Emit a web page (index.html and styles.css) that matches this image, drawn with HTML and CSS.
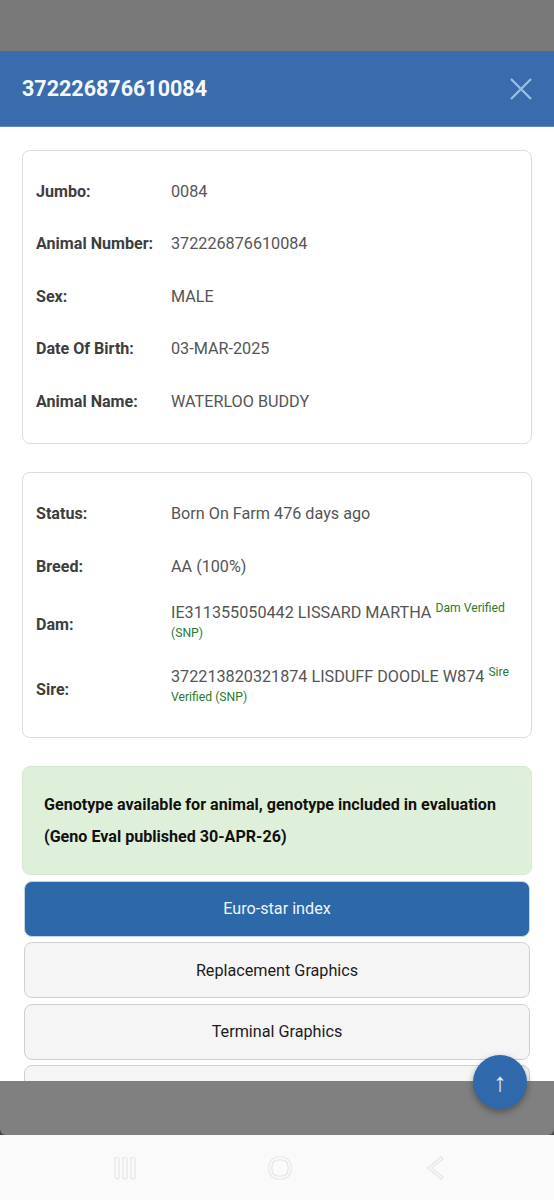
FILE: index.html

```html
<!DOCTYPE html>
<html lang="en">
<head>
  <meta charset="UTF-8">
  <meta name="viewport" content="width=device-width, initial-scale=1.0">
  <title>372226876610084</title>
  <link rel="stylesheet" href="styles.css">
</head>
<body>
  <div class="screen">
    <div class="dim-top"></div>

    <div class="modal">
      <div class="modal-header">
        <h1>372226876610084</h1>
        <svg class="close-icon" width="24" height="24" viewBox="0 0 24 24" fill="none" stroke="currentColor" stroke-width="2.2">
          <path d="M2 2 L22 22 M22 2 L2 22" />
        </svg>
      </div>

      <div class="modal-body">
        <div class="card">
          <div class="row"><span class="label">Jumbo:</span><span class="value">0084</span></div>
          <div class="row"><span class="label">Animal Number:</span><span class="value">372226876610084</span></div>
          <div class="row"><span class="label">Sex:</span><span class="value">MALE</span></div>
          <div class="row"><span class="label">Date Of Birth:</span><span class="value">03-MAR-2025</span></div>
          <div class="row"><span class="label">Animal Name:</span><span class="value">WATERLOO BUDDY</span></div>
        </div>

        <div class="card card-parents">
          <div class="row"><span class="label">Status:</span><span class="value">Born On Farm 476 days ago</span></div>
          <div class="row"><span class="label">Breed:</span><span class="value">AA (100%)</span></div>
          <div class="row row-tall">
            <span class="label">Dam:</span>
            <span class="value">IE311355050442 LISSARD MARTHA <sup class="verified">Dam Verified</sup> <sub class="verified">(SNP)</sub></span>
          </div>
          <div class="row row-tall">
            <span class="label">Sire:</span>
            <span class="value">372213820321874 LISDUFF DOODLE W874 <sup class="verified">Sire</sup> <sub class="verified">Verified (SNP)</sub></span>
          </div>
        </div>

        <div class="notice">
          <p>Genotype available for animal, genotype included in evaluation</p>
          <p>(Geno Eval published 30-APR-26)</p>
        </div>

        <div class="buttons">
          <button class="btn active">Euro-star index</button>
          <button class="btn">Replacement Graphics</button>
          <button class="btn">Terminal Graphics</button>
          <button class="btn"></button>
        </div>
      </div>
    </div>

    <div class="dim-bottom"></div>

    <div class="nav-bar">
      <svg width="24" height="24" viewBox="0 0 24 24" fill="none" stroke="currentColor" stroke-width="1.2">
        <rect x="2" y="1" width="4" height="22" rx="2" />
        <rect x="10" y="1" width="4" height="22" rx="2" />
        <rect x="18" y="1" width="4" height="22" rx="2" />
      </svg>
      <svg width="24" height="24" viewBox="0 0 24 24" fill="none" stroke="currentColor" stroke-width="1.2">
        <rect x="1" y="1" width="22" height="22" rx="9" />
        <rect x="4" y="4" width="16" height="16" rx="6" />
      </svg>
      <svg width="24" height="24" viewBox="0 0 24 24" fill="none" stroke="currentColor" stroke-width="1.2">
        <path d="M16 1 L18 3 L6.5 12 L18 21 L16 23 L2.5 12 Z" stroke-linejoin="round" />
      </svg>
    </div>

    <button class="fab">↑</button>
  </div>
</body>
</html>
```

FILE: styles.css

```css
* { box-sizing: border-box; }
body { margin: 0; font-family: Roboto, "Liberation Sans", sans-serif; background: #fafafa; }
.screen { position: relative; width: 554px; height: 1200px; display: flex; flex-direction: column; background: #444; overflow: hidden; }

.dim-top { height: 51px; background: #797979; }
.dim-bottom { height: 54px; background: #808080; border-radius: 0 0 6px 6px; }

.modal { height: 1030px; background: white; display: flex; flex-direction: column; overflow: hidden; }
.modal-header { height: 76px; flex-shrink: 0; padding: 0 21px 0 22px; display: flex; align-items: center; justify-content: space-between; background: #3a6cad; border-bottom: 1px solid #5f8ac0; }
.modal-header h1 { margin: 0; font-size: 21.5px; font-weight: 700; color: #f6f9fd; }
.close-icon { color: #9dbfe6; }

.modal-body { padding: 23px 22px 0; }
.card { border: 1px solid #dcdcdc; border-radius: 8px; padding: 14px 13px 15px; margin-bottom: 28px; background: white; }
.card-parents { padding-top: 15px; }
.row { display: flex; align-items: center; min-height: 52.5px; }
.row-tall { min-height: 64.5px; }
.label { flex: 0 0 135px; font-size: 16.1px; font-weight: 700; color: #3e3e3e; }
.value { flex: 1; font-size: 16.2px; line-height: 21px; color: #555; }
.row-tall .value { padding-bottom: 4px; }
.verified { font-size: 12.2px; line-height: 0; color: #2b7a2f; }
sup.verified { vertical-align: 6.5px; }
sub.verified { vertical-align: 2px; }

.notice { height: 109px; margin-bottom: 6px; padding: 22px 21px 0; border: 1px solid #d9e8d3; border-radius: 8px; background: #dff0da; }
.notice p { margin: 0; font-size: 16.1px; font-weight: 700; line-height: 32px; color: #111; }

.buttons { display: flex; flex-direction: column; gap: 5.5px; padding: 0 2px; }
.btn { height: 56px; flex-shrink: 0; padding-top: 1px; border: 1.5px solid #cfcfcf; border-radius: 8px; background: #f5f5f5; font-family: inherit; font-size: 16.2px; color: #1c1c1c; }
.btn.active { border-color: #c4d4e6; background: #2d68a9; color: #eef4fb; }

.nav-bar { height: 65px; padding-left: 113px; display: flex; align-items: center; background: #fafafa; color: #e6e6e6; }
.nav-bar svg:nth-child(1) { margin-right: 131px; }
.nav-bar svg:nth-child(2) { margin-right: 133px; }

.fab { position: absolute; left: 473px; top: 1055px; width: 54px; height: 54px; border: none; border-radius: 50%; background: #2f69ab; color: #e8f0fa; font-family: inherit; font-size: 26px; box-shadow: 0 3px 7px rgba(0,0,0,0.35); }
```
